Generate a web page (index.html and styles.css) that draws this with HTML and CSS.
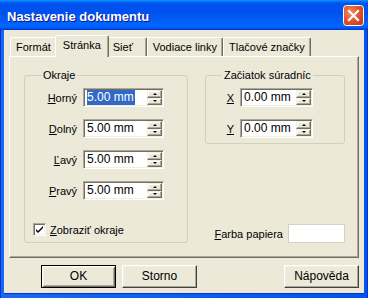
FILE: index.html
```html
<!DOCTYPE html>
<html>
<head>
    <meta charset="UTF-8">
    <link rel="stylesheet" href="styles.css">
</head>
<body>
    <div class="window">
        <div class="titlebar">
            <span class="title">Nastavenie dokumentu</span>
            <div class="close">
                <svg width="21" height="21" viewBox="0 0 21 21">
                    <defs>
                        <radialGradient id="red" cx="0.35" cy="0.35" r="0.8">
                            <stop offset="0" stop-color="#F08A68"/>
                            <stop offset="0.55" stop-color="#E0542C"/>
                            <stop offset="1" stop-color="#C23A17"/>
                        </radialGradient>
                    </defs>
                    <rect x="0.5" y="0.5" width="20" height="20" rx="3" fill="url(#red)" stroke="#FFFFFF"/>
                    <path d="M6 6 L15 15 M15 6 L6 15" stroke="#FFFFFF" stroke-width="2.2" stroke-linecap="square"/>
                </svg>
            </div>
        </div>
        <div class="client">
            <div class="tabs">
                <div class="tab">Formát</div>
                <div class="tab active">Stránka</div>
                <div class="tab">Sieť</div>
                <div class="tab">Vodiace linky</div>
                <div class="tab">Tlačové značky</div>
            </div>
            <div class="panel">
                <fieldset class="group margins">
                    <legend>Okraje</legend>
                    <div class="row">
                        <label><u>H</u>orný</label>
                        <div class="spin-field">
                            <span class="value"><span class="selected">5.00 mm</span></span>
                            <div class="spin"><span class="up"></span><span class="down"></span></div>
                        </div>
                    </div>
                    <div class="row">
                        <label><u>D</u>olný</label>
                        <div class="spin-field">
                            <span class="value">5.00 mm</span>
                            <div class="spin"><span class="up"></span><span class="down"></span></div>
                        </div>
                    </div>
                    <div class="row">
                        <label><u>Ľ</u>avý</label>
                        <div class="spin-field">
                            <span class="value">5.00 mm</span>
                            <div class="spin"><span class="up"></span><span class="down"></span></div>
                        </div>
                    </div>
                    <div class="row">
                        <label><u>P</u>ravý</label>
                        <div class="spin-field">
                            <span class="value">5.00 mm</span>
                            <div class="spin"><span class="up"></span><span class="down"></span></div>
                        </div>
                    </div>
                    <div class="check-row">
                        <span class="checkbox">
                            <svg width="9" height="9" viewBox="0 0 9 9">
                                <path d="M1 4 L3 6 L8 1 L8 3 L3 8 L1 6 Z" fill="#000000"/>
                            </svg>
                        </span>
                        <span><u>Z</u>obraziť okraje</span>
                    </div>
                </fieldset>
                <div class="right-col">
                    <fieldset class="group origin">
                        <legend>Začiatok súradníc</legend>
                        <div class="row">
                            <label><u>X</u></label>
                            <div class="spin-field short">
                                <span class="value">0.00 mm</span>
                                <div class="spin"><span class="up"></span><span class="down"></span></div>
                            </div>
                        </div>
                        <div class="row">
                            <label><u>Y</u></label>
                            <div class="spin-field short">
                                <span class="value">0.00 mm</span>
                                <div class="spin"><span class="up"></span><span class="down"></span></div>
                            </div>
                        </div>
                    </fieldset>
                    <div class="paper-row">
                        <label><u>F</u>arba papiera</label>
                        <div class="swatch"></div>
                    </div>
                </div>
            </div>
            <div class="buttons">
                <div class="btn default">OK</div>
                <div class="btn">Storno</div>
                <div class="btn help">Nápověda</div>
            </div>
        </div>
    </div>
</body>
</html>
```

FILE: styles.css
```css
body {
    margin: 0;
    font-family: "Liberation Sans", Arial, sans-serif;
    font-size: 11px;
    color: #000000;
}

.window {
    width: 368px;
    height: 298px;
    display: flex;
    flex-direction: column;
    background: linear-gradient(to right, #0831D9 1px, #166AEE 1px, #0055EA calc(100% - 1px), #0831D9 calc(100% - 1px));
}

.titlebar {
    height: 30px;
    flex: 0 0 30px;
    display: flex;
    align-items: center;
    padding: 0 4px 0 7px;
    background: linear-gradient(to bottom, #0997FF, #0053EE 10%, #0050EE 40%, #0066FF 85%, #005BFF 93%, #003DD7 97%, #003DD7);
}

.title {
    padding-top: 2px;
    color: #FFFFFF;
    font-size: 13px;
    font-weight: bold;
    text-shadow: 1px 1px #0F1089;
}

.close {
    margin-left: auto;
    width: 21px;
    height: 21px;
}

.close svg {
    display: block;
}

.client {
    flex: 1;
    margin: 0 4px 4px 4px;
    padding: 5px 5px 0 5px;
    background: #ECE9D8;
    display: flex;
    flex-direction: column;
    border-bottom: 1px solid #0831D9;
}

/* tab strip */
.tabs {
    display: flex;
    align-items: flex-end;
    height: 21px;
    padding-left: 1px;
}

.tab {
    box-sizing: border-box;
    height: 19px;
    min-width: 40px;
    padding: 0 5px;
    line-height: 18px;
    border: 1px solid #FFFFFF;
    border-bottom: none;
    border-right-color: #716F64;
    border-radius: 2px 2px 0 0;
    box-shadow: inset -1px 0 #ACA899;
    white-space: nowrap;
}

.tab.active {
    position: relative;
    z-index: 1;
    height: 22px;
    margin: 0 -2px -1px -2px;
    padding: 0 7px;
    line-height: 18px;
    background: #ECE9D8;
}

.panel {
    display: flex;
    gap: 17px;
    padding: 11px 13px 14px 14px;
    border: 1px solid #FFFFFF;
    border-right-color: #716F64;
    border-bottom-color: #716F64;
    box-shadow: inset -1px -1px #ACA899;
}

/* group boxes */
.group {
    margin: 0;
    min-width: 0;
    border: 1px solid #D0D0BF;
    border-radius: 3px;
}

.group legend {
    margin-left: 8px;
    padding: 0 2px;
    line-height: 14px;
}

.margins {
    width: 164px;
    box-sizing: border-box;
    padding: 6px 23px 5px 8px;
}

.right-col {
    width: 140px;
    display: flex;
    flex-direction: column;
}

.origin {
    padding: 6px 31px 5px 8px;
}

.row {
    display: flex;
    justify-content: flex-end;
    align-items: center;
    gap: 6px;
}

.row + .row {
    margin-top: 12px;
}

.row label u,
.paper-row label u,
.check-row u {
    text-underline-offset: 1px;
}

/* edit box with spin buttons */
.spin-field {
    box-sizing: border-box;
    width: 81px;
    height: 19px;
    display: flex;
    background: #FFFFFF;
    border: 1px solid #ACA899;
    border-right-color: #FFFFFF;
    border-bottom-color: #FFFFFF;
    box-shadow: inset 1px 1px #716F64, inset -1px -1px #F1EFE2;
    padding: 1px 1px 1px 2px;
}

.spin-field.short {
    width: 73px;
}

.value {
    flex: 1;
    line-height: 15px;
    padding-left: 1px;
    font-size: 12px;
}

.selected {
    display: inline-block;
    background: #316AC5;
    color: #FFFFFF;
    padding-right: 1px;
}

.spin {
    width: 15px;
    display: flex;
    flex-direction: column;
}

.spin span {
    flex: 1;
    display: flex;
    align-items: center;
    justify-content: center;
    background: #ECE9D8;
    border: 1px solid #F1EFE2;
    border-right-color: #716F64;
    border-bottom-color: #716F64;
    box-shadow: inset -1px -1px #ACA899, inset 1px 1px #FFFFFF;
}

.spin .up::after,
.spin .down::after {
    content: "";
    width: 0;
    height: 0;
    border-left: 2px solid transparent;
    border-right: 2px solid transparent;
}

.spin .up::after {
    border-bottom: 2px solid #000000;
}

.spin .down::after {
    border-top: 2px solid #000000;
}

.check-row {
    display: flex;
    align-items: center;
    gap: 4px;
    height: 15px;
    margin-top: 22px;
}

.checkbox {
    box-sizing: border-box;
    width: 13px;
    height: 13px;
    display: flex;
    align-items: center;
    justify-content: center;
    background: #FFFFFF;
    border: 1px solid #ACA899;
    border-right-color: #FFFFFF;
    border-bottom-color: #FFFFFF;
    box-shadow: inset 1px 1px #716F64, inset -1px -1px #F1EFE2;
}

.checkbox svg {
    display: block;
}

.paper-row {
    margin-top: auto;
    display: flex;
    justify-content: flex-end;
    align-items: center;
    gap: 5px;
}

.swatch {
    width: 57px;
    height: 19px;
    box-sizing: border-box;
    background: #FFFFFF;
    border: 1px solid #D5D2C4;
}

/* dialog buttons */
.buttons {
    display: flex;
    gap: 6px;
    margin-top: 7px;
    padding-left: 32px;
}

.btn {
    box-sizing: border-box;
    width: 75px;
    height: 23px;
    line-height: 21px;
    text-align: center;
    font-size: 12px;
    border: 1px solid #FFFFFF;
    border-right-color: #404040;
    border-bottom-color: #404040;
    box-shadow: inset -1px -1px #ACA899, inset 1px 1px #F1EFE2;
}

.btn.default {
    border-color: #000000;
    box-shadow: inset 1px 1px #FFFFFF, inset -1px -1px #716F64, inset 2px 2px #F1EFE2, inset -2px -2px #ACA899;
}

.btn.help {
    margin-left: auto;
}
```
